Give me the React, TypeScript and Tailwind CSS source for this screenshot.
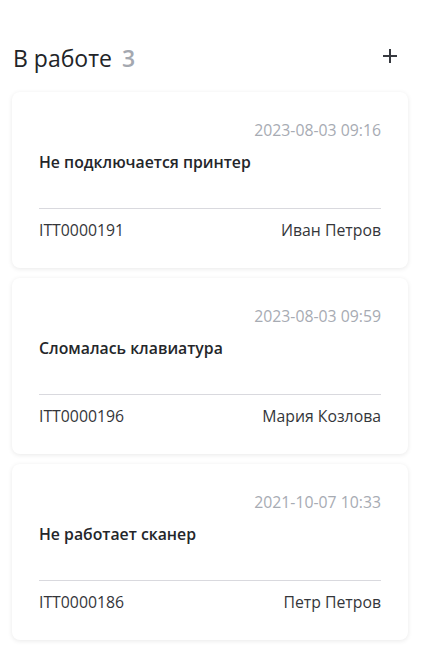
import React from "react";

const items = [
  { date: "2023-08-03 09:16", title: "Не подключается принтер", id: "ITT0000191", name: "Иван Петров" },
  { date: "2023-08-03 09:59", title: "Сломалась клавиатура", id: "ITT0000196", name: "Мария Козлова" },
  { date: "2021-10-07 10:33", title: "Не работает сканер", id: "ITT0000186", name: "Петр Петров" },
];

export default function App() {
  return (
    <div className="min-h-screen bg-white px-3 pt-[42px]" style={{ fontFamily: '"Open Sans", sans-serif' }}>
      <div className="w-[396px]">
        <div className="flex items-center justify-between h-8">
          <div className="flex items-baseline gap-[10px] text-[23px] leading-8 pl-[1px]">
            <span className="font-medium text-[#222428]">В работе</span>
            <span className="font-semibold text-[#a4a8b0]">3</span>
          </div>
          <svg width="16" height="16" viewBox="0 0 16 16" className="mr-[10px] mb-[4px]">
            <path d="M8 1v14M1 8h14" stroke="#36393f" strokeWidth="2" />
          </svg>
        </div>
        <div className="mt-[18px] flex flex-col gap-[10px]">
          {items.map((it) => (
            <div key={it.id} className="rounded-lg bg-white px-[27px] pt-[26px] pb-[26px] shadow-[0_1px_5px_rgba(0,0,0,0.09)]">
              <div className="text-right text-[15.8px] leading-6 text-[#a7abb3]">{it.date}</div>
              <div className="mt-2 text-[15.8px] leading-6 font-semibold text-[#24262a]">{it.title}</div>
              <div className="mt-[34px] border-t border-[#d9d9de] pt-[9px] flex justify-between text-[15.8px] leading-6 text-[#34363a]">
                <span>{it.id}</span>
                <span>{it.name}</span>
              </div>
            </div>
          ))}
        </div>
      </div>
    </div>
  );
}
